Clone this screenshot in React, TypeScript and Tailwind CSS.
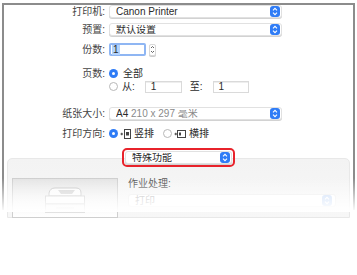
import React from "react";

const font = { fontFamily: '"Liberation Sans", "Noto Sans CJK SC", sans-serif' };

function Stepper({ faded }: { faded?: boolean }) {
  return (
    <span
      className={`flex h-[11px] w-[10px] items-center justify-center rounded-[3px] ${
        faded ? "bg-[#c5d9f7]" : "bg-[#2f7cf6]"
      }`}
    >
      <svg width="6" height="9" viewBox="0 0 6 9" fill="none">
        <path d="M1 3.3L3 1.3L5 3.3M1 5.7L3 7.7L5 5.7" stroke="white" strokeWidth="1.1" />
      </svg>
    </span>
  );
}

function Popup({ children, className }: { children: React.ReactNode; className: string }) {
  return (
    <div
      className={`flex h-[13px] items-center justify-between rounded-[3px] border border-[#e1e1e1] bg-white pl-[6px] pr-px shadow-[0_1px_0_#d2d2d2] ${className}`}
    >
      <span className="truncate leading-none">{children}</span>
      <Stepper />
    </div>
  );
}

function Radio({ on, className }: { on?: boolean; className?: string }) {
  return on ? (
    <span className={`flex h-[9px] w-[9px] shrink-0 items-center justify-center rounded-full bg-[#2f7cf6] ${className ?? ""}`}>
      <span className="h-[3px] w-[3px] rounded-full bg-white" />
    </span>
  ) : (
    <span className={`block h-[9px] w-[9px] shrink-0 rounded-full border border-[#b8b8b8] bg-white ${className ?? ""}`} />
  );
}

function Field({ className }: { className: string }) {
  return (
    <div
      className={`flex h-[12px] items-center border border-[#dadada] bg-white pl-[5px] leading-none shadow-[inset_0_1px_0_#eee] ${className}`}
    >
      1
    </div>
  );
}

function Row({ label, children, className }: { label: string; children: React.ReactNode; className?: string }) {
  return (
    <div className={`flex h-[13px] items-center ${className ?? ""}`}>
      <div className="w-[101px] text-right leading-none text-[#444]">{label}</div>
      <div className="ml-[4px] flex items-center">{children}</div>
    </div>
  );
}

function PortraitIcon() {
  return (
    <svg width="11" height="10" viewBox="0 0 11 10" fill="none" stroke="#444" strokeWidth="1">
      <path d="M0.5 5H3M1.75 3.75V6.25" />
      <rect x="4.5" y="0.5" width="6" height="9" />
      <rect x="6" y="3" width="3" height="3.5" fill="#444" stroke="none" />
    </svg>
  );
}

function LandscapeIcon() {
  return (
    <svg width="12" height="10" viewBox="0 0 12 10" fill="none" stroke="#444" strokeWidth="1">
      <path d="M0.5 5H3M1.75 3.75V6.25" />
      <rect x="3.5" y="1.5" width="8" height="7" />
      <rect x="5" y="3.5" width="2" height="3" fill="#444" stroke="none" />
    </svg>
  );
}

function PrinterArt() {
  return (
    <svg width="42" height="28" viewBox="0 0 42 28" fill="none">
      <path d="M5 8 Q6 3 11 3 H32 Q37 3 37 8 V11 H5 Z" fill="#fbfbfb" stroke="#c2c2c2" />
      <path d="M14 5 H31 L28 9 H17 Z" fill="#d2d2d2" />
      <rect x="1.5" y="11" width="39" height="8" fill="#fdfdfd" stroke="#c8c8c8" />
      <rect x="1.5" y="19" width="39" height="8" fill="#f6f6f6" stroke="#c8c8c8" />
      <path d="M12 23 H30" stroke="#d4d4d4" />
    </svg>
  );
}

export default function App() {
  return (
    <div className="relative h-[275px] w-[357px] overflow-hidden bg-white text-[10px] text-[#2b2b2b]" style={font}>
      <div className="ml-[2px] mt-[3px] h-[207px] w-[353px] border-x-2 border-t-2 border-[#8c8c8c] bg-white">
        <div className="flex flex-col">
          <Row label="打印机:">
            <Popup className="w-[173px]">Canon Printer</Popup>
          </Row>
          <Row label="预置:" className="mt-[5px]">
            <Popup className="w-[173px]">默认设置</Popup>
          </Row>
          <Row label="份数:" className="mt-[7px]">
            <div className="flex h-[13px] w-[37px] items-center rounded-[2px] border-2 border-[#8fb6f3] bg-white pl-[1px]">
              <span className="bg-[#b3d3fc] px-px leading-none">1</span>
            </div>
            <span className="ml-[3px] flex h-[12px] w-[7px] flex-col items-center justify-center rounded-[2px] border border-[#d8d8d8] bg-white shadow-[0_1px_0_#ccc]">
              <svg width="5" height="9" viewBox="0 0 5 9" fill="none">
                <path d="M1 3L2.5 1.5L4 3M1 6L2.5 7.5L4 6" stroke="#555" strokeWidth="0.9" />
              </svg>
            </span>
          </Row>
          <Row label="页数:" className="mt-[11px]">
            <Radio on />
            <span className="ml-[5px] leading-none">全部</span>
          </Row>
          <div className="ml-[105px] flex h-[13px] items-center">
            <Radio />
            <span className="ml-[4px] leading-none">从:</span>
            <Field className="ml-[10px] w-[37px]" />
            <span className="ml-[8px] leading-none">至:</span>
            <Field className="ml-[10px] w-[36px]" />
          </div>
          <Row label="纸张大小:" className="mt-[14px]">
            <Popup className="w-[173px]">
              <span className="text-[#2b2b2b]">A4</span>
              <span className="text-[#8a8a8a]"> 210 x 297 毫米</span>
            </Popup>
          </Row>
          <Row label="打印方向:" className="mt-[7px]">
            <Radio on />
            <span className="ml-[2px] flex"><PortraitIcon /></span>
            <span className="ml-[3px] leading-none">竖排</span>
            <Radio className="ml-[9px]" />
            <span className="ml-[2px] flex"><LandscapeIcon /></span>
            <span className="ml-[3px] leading-none">横排</span>
          </Row>
          <div className="relative z-10 mt-[8px] flex justify-center">
            <div className="rounded-[5px] border-2 border-[#e8232b] p-px">
              <Popup className="w-[107px]">特殊功能</Popup>
            </div>
          </div>
          <div className="mx-[3px] -mt-[9px] flex h-[60px] rounded-t-[5px] border border-[#e8e8e8] bg-linear-to-b from-[#f3f3f3] to-[#f7f7f7] pl-[4px] pt-[19px]">
            <div className="flex h-[40px] w-[106px] items-end justify-center border border-[#cfcfcf] bg-linear-to-b from-[#e4e4e4] to-white pb-[4px]">
              <PrinterArt />
            </div>
            <div className="ml-[10px] flex flex-col pt-[1px]">
              <span className="leading-none text-[#555]">作业处理:</span>
              <div className="mt-[5px] flex h-[13px] w-[208px] items-center justify-between rounded-[3px] border border-[#ececec] bg-white pl-[6px] pr-[3px] text-[#b0b0b0]">
                <span className="leading-none">打印</span>
                <Stepper faded />
              </div>
            </div>
          </div>
        </div>
      </div>
      <div className="pointer-events-none absolute left-0 right-0 top-[178px] h-[34px] bg-linear-to-b from-white/0 via-white/50 to-white" />
    </div>
  );
}
